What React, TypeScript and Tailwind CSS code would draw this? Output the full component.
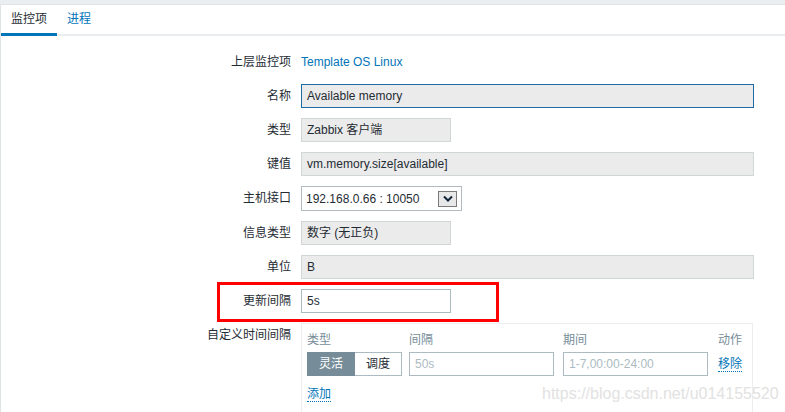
import React from "react";

const FONT = { fontFamily: '"Liberation Sans", Arial, "Noto Sans CJK SC", sans-serif' };

function Row({ label, children }: { label: string; children: React.ReactNode }) {
  return (
    <>
      <div className="h-[24px] leading-[24px] text-right text-[#1f2c33]">{label}</div>
      <div className="min-h-[24px] flex items-center">{children}</div>
    </>
  );
}

function ReadOnly({ value, wide, focused }: { value: string; wide?: boolean; focused?: boolean }) {
  return (
    <div
      className={`h-[24px] leading-[22px] px-[5px] bg-[#ebebeb] text-[#1f2c33] border ${
        focused ? "border-[#1f6aa0]" : "border-[#d1d6d9]"
      } ${wide ? "w-[453px]" : "w-[150px]"}`}
    >
      {value}
    </div>
  );
}

function DottedLink({ children }: { children: React.ReactNode }) {
  return (
    <span className="text-[#0275b8] border-b border-dotted border-[#0275b8] leading-[15px]">{children}</span>
  );
}

export default function App() {
  return (
    <div className="relative w-[785px] h-[412px] overflow-hidden bg-[#ebeef0] pt-[4px] text-[12px]" style={FONT}>
      <div className="h-full bg-white border-t border-l border-[#dfe4e7]">
        {/* tabs */}
        <div className="flex h-[31px] border-b-2 border-[#ebeef0]">
          <div className="px-[10px] h-[31px] leading-[29px] border-b-[3px] border-[#0275b8] text-[#1f2c33]">监控项</div>
          <div className="px-[10px] h-[29px] leading-[29px] text-[#0275b8]">进程</div>
        </div>

        {/* form */}
        <div className="grid grid-cols-[290px_1fr] gap-x-[10px] gap-y-[10px] pt-[14px]">
          <Row label="上层监控项">
            <span className="text-[#0275b8]">Template OS Linux</span>
          </Row>
          <Row label="名称">
            <ReadOnly value="Available memory" wide focused />
          </Row>
          <Row label="类型">
            <ReadOnly value="Zabbix 客户端" />
          </Row>
          <Row label="键值">
            <ReadOnly value="vm.memory.size[available]" wide />
          </Row>
          <Row label="主机接口">
            <div className="h-[25px] w-[161px] border border-[#b1babf] bg-white flex items-center justify-between pl-[4px] pr-[4px] text-[#1f2c33]">
              <span>192.168.0.66 : 10050</span>
              <span className="w-[19px] h-[16px] border border-[#7a7a7a] bg-[#e8e8e8] flex items-center justify-center">
                <svg width="10" height="7" viewBox="0 0 10 7">
                  <path d="M1 1.5 L5 5.5 L9 1.5" fill="none" stroke="#10243a" strokeWidth="2" />
                </svg>
              </span>
            </div>
          </Row>
          <Row label="信息类型">
            <ReadOnly value="数字 (无正负)" />
          </Row>
          <Row label="单位">
            <ReadOnly value="B" wide />
          </Row>
          <Row label="更新间隔">
            <div className="h-[24px] w-[150px] leading-[22px] px-[5px] border border-[#acbbc2] bg-white text-[#1f2c33]">5s</div>
          </Row>
          <div className="leading-[24px] text-right text-[#1f2c33]">自定义时间间隔</div>
          <div className="w-[452px] h-[100px] border border-[#ebeef0] px-[5px] pt-[7px]">
            <div className="flex text-[#768d99] leading-[18px]">
              <span className="w-[102px]">类型</span>
              <span className="w-[154px]">间隔</span>
              <span className="w-[155px]">期间</span>
              <span>动作</span>
            </div>
            <div className="flex items-center mt-[3px]">
              <div className="flex h-[24px] w-[95px]">
                <span className="w-[48px] bg-[#768d99] text-white flex items-center justify-center">灵活</span>
                <span className="flex-1 border border-l-0 border-[#acbbc2] text-[#1f2c33] flex items-center justify-center">调度</span>
              </div>
              <div className="ml-[7px] h-[24px] w-[145px] border border-[#acbbc2] px-[5px] leading-[22px] text-[#acbbc2]">50s</div>
              <div className="ml-[9px] h-[24px] w-[145px] border border-[#acbbc2] px-[5px] leading-[22px] text-[#acbbc2]">1-7,00:00-24:00</div>
              <span className="ml-[10px]">
                <DottedLink>移除</DottedLink>
              </span>
            </div>
            <div className="mt-[9px]">
              <DottedLink>添加</DottedLink>
            </div>
          </div>
        </div>
      </div>

      {/* annotation */}
      <div className="absolute left-[217px] top-[282px] w-[282px] h-[40px] border-[3px] border-[#ff0000]" />
      {/* watermark */}
      <div className="absolute left-[542px] top-[382px] text-[16px] text-[#e2e2e2]">https://blog.csdn.net/u014155520</div>
    </div>
  );
}
